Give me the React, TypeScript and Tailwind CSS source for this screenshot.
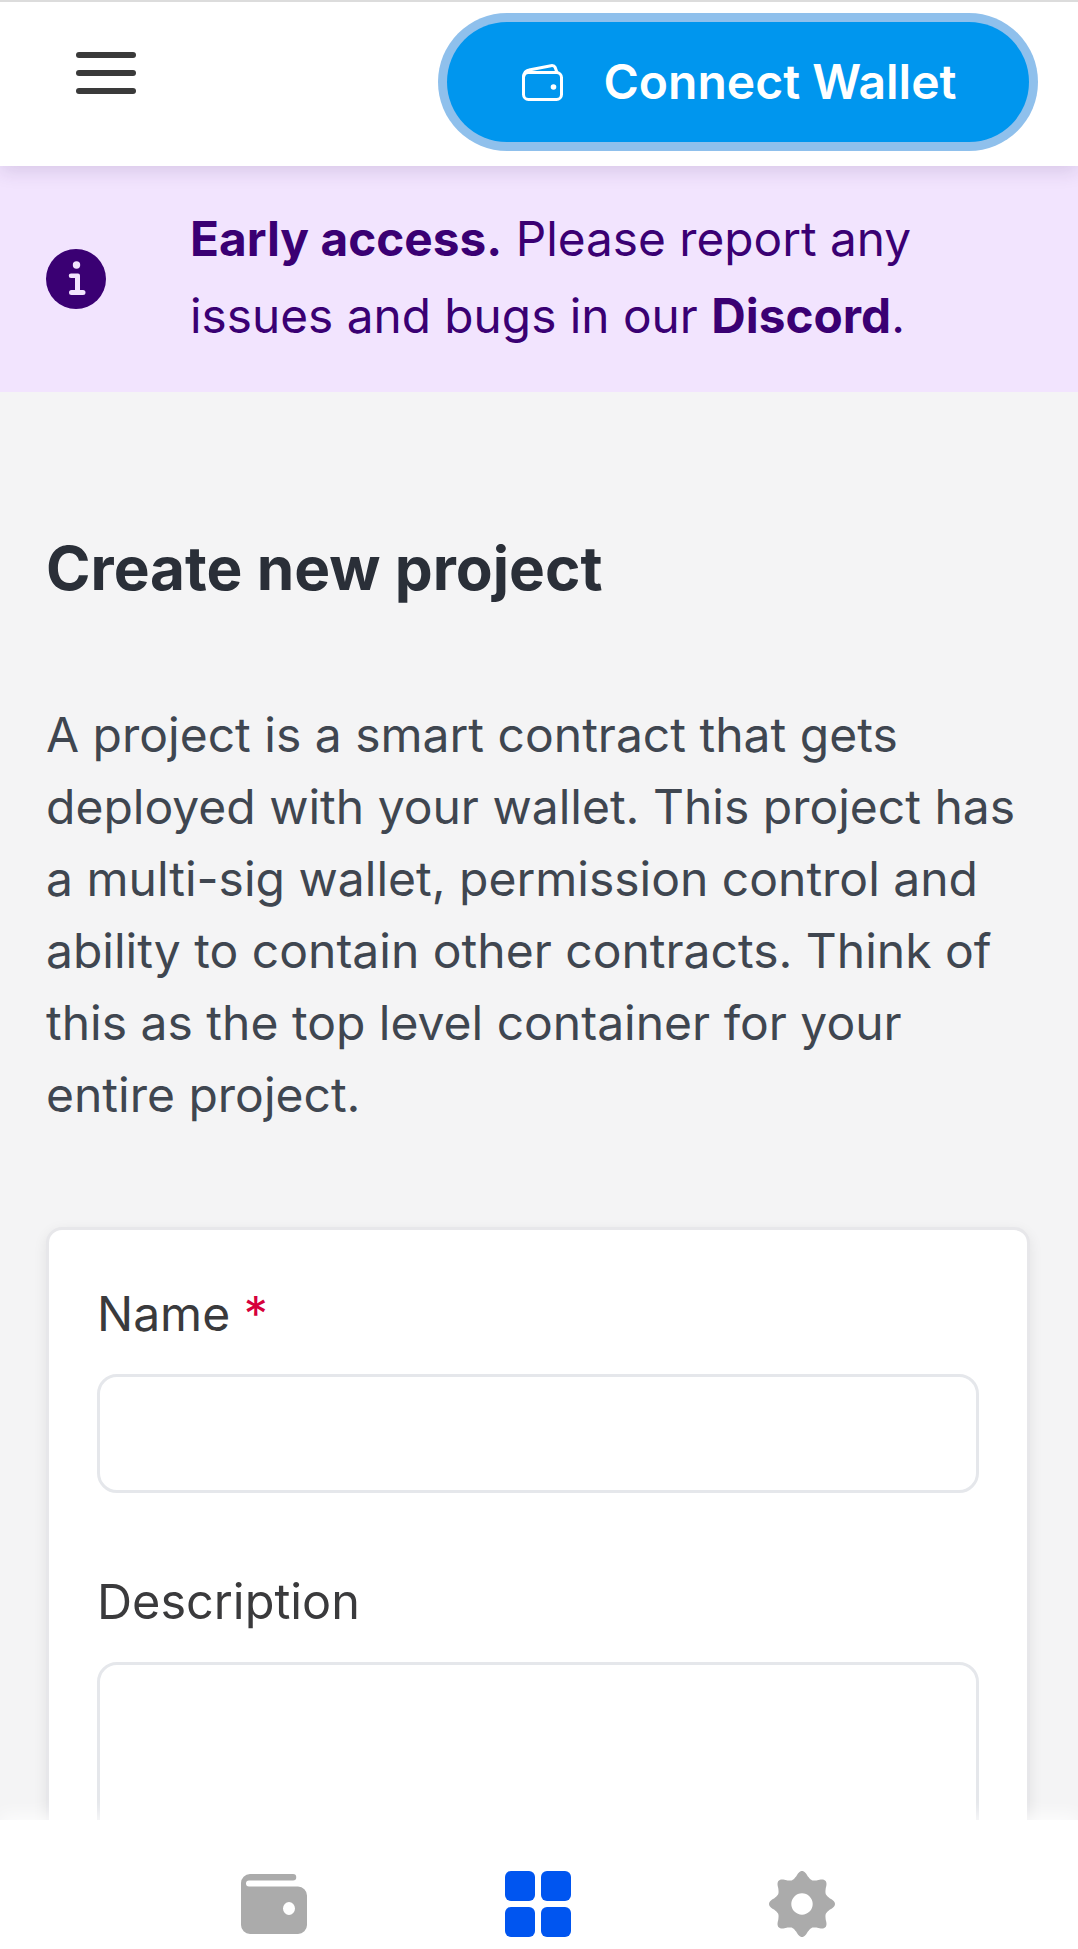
import React from 'react';

const gearPath = (() => {
    // eight rounded teeth round the centre of a 66 box
    const pts: string[] = [];
    for (let i = 0; i < 240; i++) {
        const t = (i / 240) * Math.PI * 2;
        const c = Math.cos(8 * t);
        const r = 28.5 + 4.5 * c * (c > 0 ? 1 : 0.6);
        pts.push(`${(33 + r * Math.sin(t)).toFixed(2)} ${(33 - r * Math.cos(t)).toFixed(2)}`);
    }
    return `M${pts.join('L')}Z`;
})();

const SmallWallet = () => (
    <svg width="41" height="37" viewBox="0 0 41 37" fill="none" stroke="#fff" strokeWidth="3" strokeLinecap="round" strokeLinejoin="round">
        <rect x="1.5" y="8.5" width="38" height="27" rx="5" />
        <path d="M1.5 13C2 8.500 4 6.500 7 6L29 1.700C31 1.400 32.500 2 33.200 3.500L35 8.500" />
        <circle cx="31.500" cy="23" r="2.800" fill="#fff" stroke="none" />
    </svg>
);

const NavWallet = () => (
    <svg width="66" height="60" viewBox="0 0 66 60" fill="#ababab">
        <path fillRule="evenodd" d="M9 0H52a3.200 3.200 0 010 6.500H8a3 3 0 000 6H57a9 9 0 019 9V51a9 9 0 01-9 9H9a9 9 0 01-9-9V9a9 9 0 019-9zM48 28a6 6.500 0 100 13 6 6.500 0 000-13z" />
    </svg>
);

const NavGrid = () => (
    <svg width="66" height="66" viewBox="0 0 66 66" fill="#0055f0">
        <rect x="0" y="0" width="30" height="30" rx="6" />
        <rect x="36" y="0" width="30" height="30" rx="6" />
        <rect x="0" y="36" width="30" height="30" rx="6" />
        <rect x="36" y="36" width="30" height="30" rx="6" />
    </svg>
);

const NavGear = () => (
    <svg width="66" height="66" viewBox="0 0 66 66" fill="#ababab">
        <path fillRule="evenodd" d={`${gearPath}M33 22.300a10.700 10.700 0 100 21.400 10.700 10.700 0 000-21.400z`} />
    </svg>
);

const InfoIcon = () => (
    <svg width="60" height="60" viewBox="0 0 60 60" className="shrink-0">
        <circle cx="30" cy="30" r="30" fill="#3a0073" />
        <circle cx="30.500" cy="16" r="3.700" fill="#f2e4fe" />
        <path d="M25 24.500H32a2 2 0 0 1 2 2V41H37a2.500 2.500 0 0 1 0 5H25.500a2.500 2.500 0 0 1 0-5H29V29H25a2.250 2.250 0 0 1 0-4.500Z" fill="#f2e4fe" />
    </svg>
);

export default function App() {
    return (
        <div className="h-[1949px] w-[1078px] flex flex-col overflow-hidden bg-[#f4f4f5] font-['Inter',sans-serif]">
            {/* Header */}
            <header className="relative z-10 h-[166px] shrink-0 bg-white border-t-[2px] border-[#dcdcdc] shadow-[0_5px_18px_rgba(60,30,90,0.14)] flex items-center justify-between pl-[76px] pr-[49px]">
                <div className="flex flex-col gap-[12px] w-[60px] mb-[22px]">
                    <div className="h-[6px] rounded-full bg-[#3a3a3a]"></div>
                    <div className="h-[6px] rounded-full bg-[#3a3a3a]"></div>
                    <div className="h-[6px] rounded-full bg-[#3a3a3a]"></div>
                </div>
                <button className="h-[120px] w-[582px] mt-[-4px] pl-[3px] rounded-full bg-[#0096ee] ring-[9px] ring-[#8fc0ec] flex items-center justify-center gap-[40px] text-white text-[48px] font-semibold">
                    <SmallWallet />
                    <span>Connect Wallet</span>
                </button>
            </header>

            {/* Banner */}
            <div className="h-[226px] shrink-0 bg-[#f2e4fe] flex items-center pl-[46px] gap-[84px] text-[#3a0073] text-[47.75px] leading-[77px]">
                <InfoIcon />
                <p className="w-[800px] mt-[-2px]">
                    <strong className="font-bold">Early access.</strong> Please report any issues and bugs in our <strong className="font-bold">Discord</strong>.
                </p>
            </div>

            {/* Page body */}
            <main className="flex-1 min-h-0 overflow-hidden px-[46px] pt-[141px]">
                <h1 className="text-[60.25px] leading-[72px] font-bold text-[#2a2f38]">Create new project</h1>
                <p className="mt-[94px] text-[48px] leading-[72px] text-[#3f4650]">
                    A project is a smart contract that gets deployed with your wallet. This project has a multi-sig wallet, permission control and ability to contain other contracts. Think of this as the top level container for your entire project.
                </p>
                <div className="mt-[96px] h-[800px] w-[984px] rounded-[16px] bg-white border-[3px] border-[#e7e7ea] shadow-[0_4px_14px_rgba(0,0,0,0.08)] px-[48px] pt-[52px]">
                    <label className="block text-[48px] leading-[64px] text-[#3a3a3c]">
                        Name <span className="text-[#d6003c]">*</span>
                    </label>
                    <div className="mt-[28px] h-[119px] rounded-[20px] border-[3px] border-[#e5e7eb] bg-white"></div>
                    <label className="block mt-[77px] text-[48.6px] leading-[64px] text-[#3a3a3c]">Description</label>
                    <div className="mt-[28px] h-[400px] rounded-[20px] border-[3px] border-[#e5e7eb] bg-white"></div>
                </div>
            </main>

            {/* Bottom nav */}
            <nav className="relative z-10 h-[129px] shrink-0 bg-white shadow-[0_-6px_16px_rgba(255,255,255,0.8)] flex justify-center">
                <div className="w-[792px] grid grid-cols-3 pt-[51px] mr-[2px]">
                    <div className="flex justify-center pt-[3px]"><NavWallet /></div>
                    <div className="flex justify-center"><NavGrid /></div>
                    <div className="flex justify-center"><NavGear /></div>
                </div>
            </nav>
        </div>
    );
}
